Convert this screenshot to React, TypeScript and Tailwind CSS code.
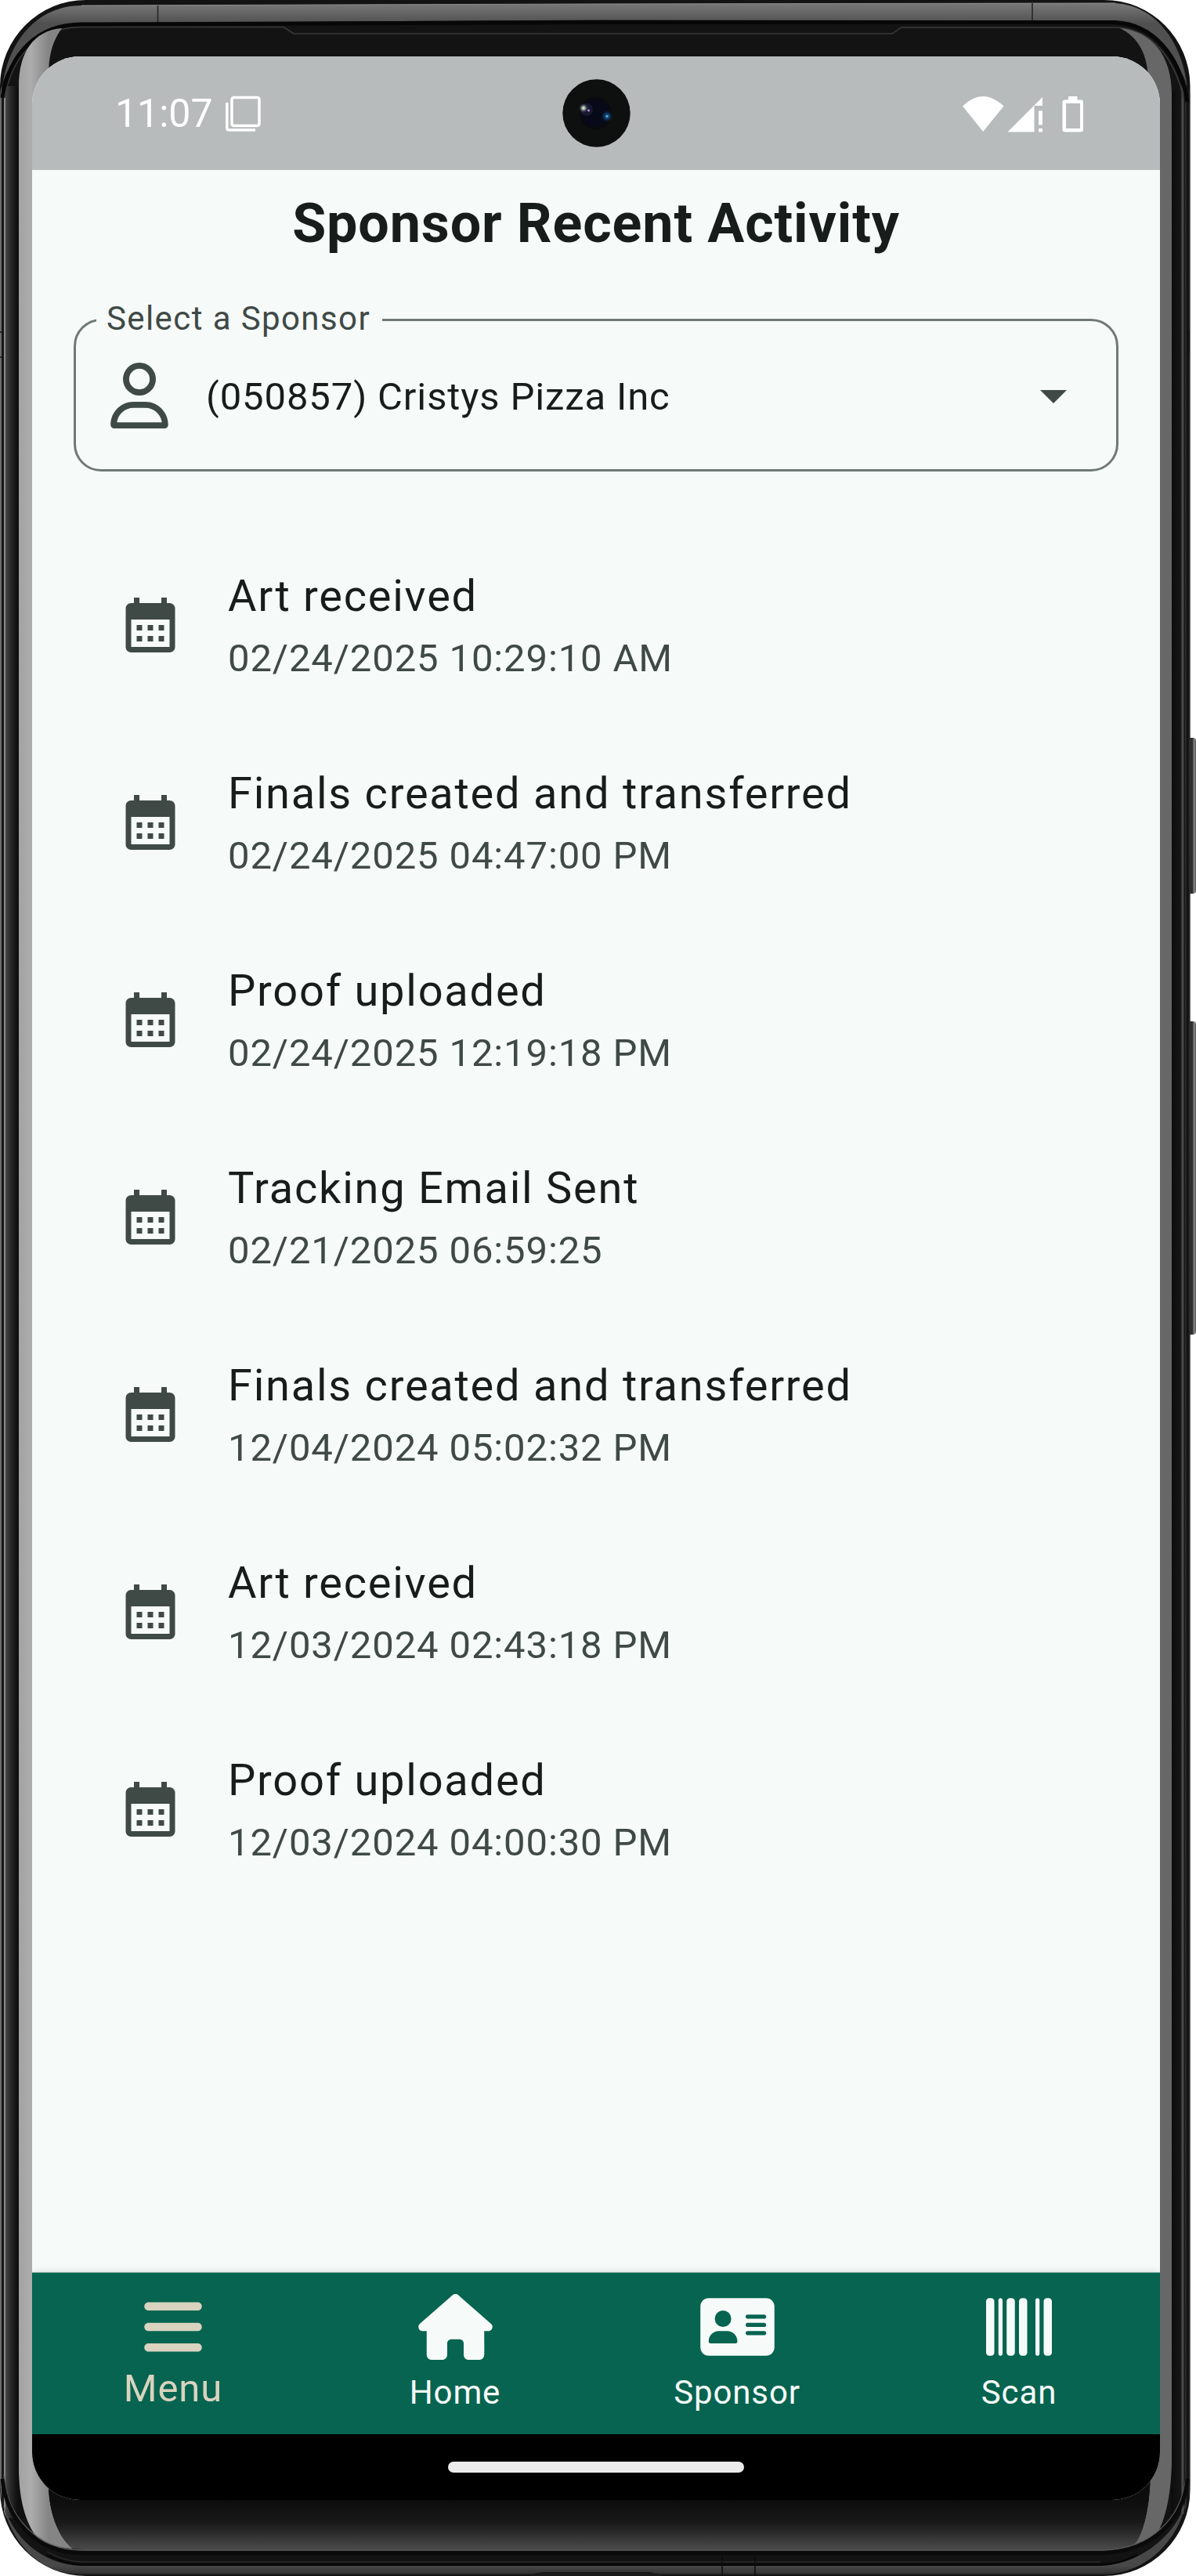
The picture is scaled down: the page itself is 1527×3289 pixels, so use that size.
import React from "react";
import { FaAddressCard, FaBarcode, FaBars, FaHouse, FaRegUser } from "react-icons/fa6";

const activities = [
  { title: "Art received", date: "02/24/2025 10:29:10 AM" },
  { title: "Finals created and transferred", date: "02/24/2025 04:47:00 PM" },
  { title: "Proof uploaded", date: "02/24/2025 12:19:18 PM" },
  { title: "Tracking Email Sent", date: "02/21/2025 06:59:25" },
  { title: "Finals created and transferred", date: "12/04/2024 05:02:32 PM" },
  { title: "Art received", date: "12/03/2024 02:43:18 PM" },
  { title: "Proof uploaded", date: "12/03/2024 04:00:30 PM" },
];

function PhoneBody() {
  return (
    <svg className="absolute inset-0 h-[3289px] w-[1527px]" viewBox="0 0 1527 3289" fill="none" aria-hidden="true">
      <defs>
        <linearGradient id="band" x1="0" y1="5" x2="0" y2="30" gradientUnits="userSpaceOnUse">
          <stop offset="0" stopColor="#777777" />
          <stop offset="1" stopColor="#505050" />
        </linearGradient>
        <linearGradient id="left" x1="0" y1="0" x2="41" y2="0" gradientUnits="userSpaceOnUse">
          <stop offset="0" stopColor="#6b6b6b" />
          <stop offset="0.04" stopColor="#6b6b6b" />
          <stop offset="0.06" stopColor="#161616" />
          <stop offset="0.11" stopColor="#161616" />
          <stop offset="0.12" stopColor="#8a8a8a" />
          <stop offset="0.16" stopColor="#8a8a8a" />
          <stop offset="0.18" stopColor="#454545" />
          <stop offset="0.35" stopColor="#262626" />
          <stop offset="0.55" stopColor="#0f0f0f" />
        </linearGradient>
        <linearGradient id="right" x1="1495" y1="0" x2="1520" y2="0" gradientUnits="userSpaceOnUse">
          <stop offset="0" stopColor="#0c0c0c" />
          <stop offset="0.5" stopColor="#151515" />
          <stop offset="0.56" stopColor="#444444" />
          <stop offset="0.64" stopColor="#4d4d4d" />
          <stop offset="0.68" stopColor="#0c0c0c" />
          <stop offset="0.76" stopColor="#353535" />
          <stop offset="0.8" stopColor="#101010" />
          <stop offset="0.93" stopColor="#1a1a1a" />
          <stop offset="1" stopColor="#6b6b6b" />
        </linearGradient>
        <linearGradient id="glass" x1="0" y1="3192" x2="0" y2="3256" gradientUnits="userSpaceOnUse">
          <stop offset="0" stopColor="#0d0d0d" />
          <stop offset="0.45" stopColor="#191919" />
          <stop offset="1" stopColor="#4b4b4b" />
        </linearGradient>
        <linearGradient id="shineLeft" x1="24" y1="0" x2="62" y2="0" gradientUnits="userSpaceOnUse">
          <stop offset="0" stopColor="#a2a2a2" />
          <stop offset="0.4" stopColor="#adadad" />
          <stop offset="1" stopColor="#858585" />
        </linearGradient>
        <linearGradient id="foot" x1="0" y1="3276" x2="0" y2="3289" gradientUnits="userSpaceOnUse">
          <stop offset="0" stopColor="#484848" />
          <stop offset="0.7" stopColor="#333333" />
          <stop offset="1" stopColor="#141414" />
        </linearGradient>
        <linearGradient id="button" x1="1518" y1="0" x2="1527" y2="0" gradientUnits="userSpaceOnUse">
          <stop offset="0" stopColor="#1b1b1b" />
          <stop offset="0.5" stopColor="#343434" />
          <stop offset="0.75" stopColor="#8a8a8a" />
          <stop offset="1" stopColor="#565656" />
        </linearGradient>
      </defs>

      <rect x="1512" y="942" width="15" height="199" rx="4" fill="url(#button)" />
      <rect x="1512" y="1304" width="15" height="400" rx="4" fill="url(#button)" />

      <rect x="0" y="0" width="1519.5" height="3289" rx="110" fill="#131313" />
      <path d="M0 130V3165Q1 3200 8 3215H41V110H2Q0 118 0 130Z" fill="url(#left)" />
      <path d="M1495 120V3210H1512Q1519.500 3190 1519.500 3170V120L1515 100Z" fill="url(#right)" />

      <path d="M2 120C8 50 50 7 104 7L763 5L1318 4H1424C1474 7 1508 50 1516 110C1496 58 1464 29 1420 26L763 25.500L201 29H104C58 31 22 58 4 104Z" fill="url(#band)" />
      <path d="M104 7L763 5L1424 4" stroke="#8a8a8a" strokeWidth="1" />
      <path d="M201.500 7V30M1318 4V26" stroke="#222222" strokeWidth="1.500" />
      <path d="M3 125C12 68 48 31 104 31L763 28.500H1424C1472 31 1506 70 1516 130" stroke="#070707" strokeWidth="5" />
      <path d="M6 125C15 72 48 35 104 34.500H362L375 43H1139L1151 35H1424C1470 36 1500 75 1511 125" stroke="#3b3b3b" strokeWidth="1.500" />

      <path d="M24 110C24 68 42 39 79 36C66 54 62 72 62 100V3172C62 3206 74 3240 93 3254C72 3253 50 3246 45 3237C30 3215 24 3185 24 3150Z" fill="url(#shineLeft)" />
      <path d="M1430 36C1455 48 1465 72 1466 100L1481 160V3130L1468.500 3168C1467 3205 1459 3240 1445 3252C1456 3251 1468 3247 1473 3241C1490 3220 1496 3175 1496 3140V120C1496 70 1470 40 1430 36Z" fill="#676767" />

      <path d="M62 3150V3172C62 3206 74 3240 93 3254L110 3255.500H1410L1445 3252C1459 3240 1467 3205 1468.500 3168V3150Z" fill="url(#glass)" />
      <path d="M5 3160C8 3210 45 3256 104 3256H1410C1470 3254 1508 3215 1514 3165" stroke="#5c5c5c" strokeWidth="1.500" />
      <path d="M3 3165C8 3215 45 3259.500 104 3259.500H1410C1470 3257 1512 3218 1516 3165" stroke="#0a0a0a" strokeWidth="5" />
      <path d="M2 3190C14 3240 55 3275 104 3276H1405C1455 3275 1505 3235 1515 3190C1506 3245 1462 3286 1410 3287H104C50 3287 12 3245 2 3190Z" fill="url(#foot)" />
      <path d="M60 3262Q80 3273 104 3274.500H1405Q1430 3274 1452 3262" stroke="#060606" strokeWidth="2.500" />
      <path d="M60 3258Q82 3270 104 3271H1405" stroke="#333333" strokeWidth="1" />
      <path d="M922 3258V3289M964 3258V3289" stroke="#0c0c0c" strokeWidth="1.500" />
      <path d="M676 3289Q684 3284 696 3284H830Q838 3285 846 3289Z" fill="#1a1a1a" />
      <path d="M0 424H3M0 456H3M1518 421V451" stroke="#161616" strokeWidth="1.500" />
    </svg>
  );
}

function Camera() {
  return (
    <svg className="absolute left-[677px] top-[29px] h-[87px] w-[87px]" viewBox="0 0 87 87" aria-hidden="true">
      <defs>
        <radialGradient id="lens">
          <stop offset="0" stopColor="#070a18" />
          <stop offset="0.7" stopColor="#08091a" />
          <stop offset="1" stopColor="#090b0b" />
        </radialGradient>
        <radialGradient id="cyan">
          <stop offset="0" stopColor="#a9dcff" />
          <stop offset="0.25" stopColor="#155788" />
          <stop offset="1" stopColor="#0a2a55" stopOpacity="0" />
        </radialGradient>
        <radialGradient id="white">
          <stop offset="0" stopColor="#ffffff" />
          <stop offset="0.3" stopColor="#a5b5a5" />
          <stop offset="1" stopColor="#304050" stopOpacity="0" />
        </radialGradient>
      </defs>
      <circle cx="43.500" cy="43.500" r="43.200" fill="#0e100f" />
      <circle cx="42.500" cy="43.500" r="21" fill="url(#lens)" />
      <circle cx="31" cy="39" r="8" fill="#3c3f66" opacity="0.3" />
      <circle cx="57" cy="47.500" r="7.500" fill="url(#cyan)" />
      <circle cx="27" cy="37" r="6" fill="url(#white)" />
      <circle cx="33.500" cy="40" r="1.500" fill="#c58be0" />
    </svg>
  );
}

function StatusBar() {
  return (
    <header className="relative flex h-[145px] shrink-0 items-center justify-between bg-[#b7bbbb] pl-[106px] pr-[97px] text-white">
      <div className="flex items-center gap-[16px]">
        <span className="text-[50px] leading-[60px]">11:07</span>
        <svg className="h-[46px] w-[45px]" viewBox="0 0 45 46" fill="none" stroke="white" strokeWidth="3.500" aria-hidden="true">
          <rect x="8" y="2.500" width="35" height="36" rx="2.500" />
          <path d="M1.800 9V41.500Q1.800 44 4.300 44H38" />
        </svg>
      </div>
      <svg className="h-[48px] w-[156px]" viewBox="0 0 156 48" fill="white" aria-hidden="true">
        <path d="M1 14.500Q27 -10.500 53.500 14.500L27.200 47Z" />
        <path d="M58.500 47.500L103 3V14H92.500V47.500Z" />
        <path d="M98 20.500H103V38.500H98ZM98 43H103V47.500H98Z" />
        <path fillRule="evenodd" d="M136 2H147.500V6.500H152Q155 6.500 155 9.500V44.500Q155 47.500 152 47.500H131.500Q128.500 47.500 128.500 44.500V9.500Q128.500 6.500 131.500 6.500H136ZM133 11V43H151V11Z" />
      </svg>
      <Camera />
    </header>
  );
}

function SponsorSelect() {
  return (
    <div className="relative ml-[53px] mr-[53px] mt-[73px] flex h-[195px] items-center rounded-[35px] border-[3px] border-[#6f7975] pl-[44px] pr-[63px]">
      <span className="absolute left-[26px] top-[-28px] bg-[#f6faf8] pl-[13px] pr-[15px] text-[42px] leading-[50px] tracking-[1.4px] text-[#3f4946]">
        Select a Sponsor
      </span>
      <FaRegUser className="h-[84px] w-[74px] text-[#3f4946]" />
      <span className="ml-[48px] flex-1 pt-[5px] text-[49px] leading-[60px] tracking-[0.875px]">(050857) Cristys Pizza Inc</span>
      <svg className="mt-[3px] h-[17px] w-[34px]" viewBox="0 0 34 17" fill="#3f4946" aria-hidden="true">
        <path d="M0 0H34L17 17Z" />
      </svg>
    </div>
  );
}

function CalendarIcon() {
  return (
    <svg className="size-[84px] text-[#3f4946]" viewBox="0 0 24 24" fill="currentColor" aria-hidden="true">
      <path d="M19 4h-1V2h-2v2H8V2H6v2H5c-1.110 0-1.990.9-1.990 2L3 20c0 1.100.89 2 2 2h14c1.100 0 2-.9 2-2V6c0-1.100-.9-2-2-2zm0 16H5V10h14v10zM9 14H7v-2h2v2zm4 0h-2v-2h2v2zm4 0h-2v-2h2v2zm-8 4H7v-2h2v2zm4 0h-2v-2h2v2zm4 0h-2v-2h2v2z" />
    </svg>
  );
}

function ActivityRow({ title, date }: { title: string; date: string }) {
  return (
    <li className="flex h-[252px] items-center gap-[57px] pl-[109px]">
      <CalendarIcon />
      <div>
        <p className="text-[56px] leading-[84px] tracking-[1.75px]">{title}</p>
        <p className="pt-px text-[49px] leading-[74px] tracking-[0.875px] text-[#3f4946]">{date}</p>
      </div>
    </li>
  );
}

function NavTab({ label, icon }: { label: string; icon: React.ReactNode }) {
  return (
    <a className="flex flex-1 flex-col items-center pt-[27px] text-[#f6faf8]">
      {icon}
      <span className="mt-[17px] text-[42px] leading-[50px] tracking-[0.875px]">{label}</span>
    </a>
  );
}

export default function App() {
  return (
    <div className="relative h-[3289px] w-[1527px] overflow-hidden bg-white pl-[41px] pt-[72px] font-['Roboto',sans-serif] text-[#171d1b]">
      <PhoneBody />
      <div className="relative flex h-[3120px] w-[1440px] flex-col overflow-hidden rounded-[61px] bg-[#f6faf8]">
        <StatusBar />
        <main className="flex flex-1 flex-col">
          <h1 className="mt-[19px] text-center text-[70px] font-bold leading-[98px] tracking-[0.875px]">Sponsor Recent Activity</h1>
          <SponsorSelect />
          <ul className="mt-[70px]">
            {activities.map((activity, index) => (
              <ActivityRow key={index} {...activity} />
            ))}
          </ul>
        </main>
        <nav className="flex h-[207px] shrink-0 border-t border-[#86aea4] bg-[#066450] shadow-[0_0_10px_rgba(0,0,0,0.12)]">
          <a className="flex flex-1 flex-col items-center pt-[27px] text-[#d9d3bf]">
            <FaBars className="h-[84px] w-[74px]" />
            <span className="mt-[7px] text-[49px] leading-[60px] tracking-[0.875px]">Menu</span>
          </a>
          <NavTab label="Home" icon={<FaHouse className="h-[84px] w-[95px]" />} />
          <NavTab label="Sponsor" icon={<FaAddressCard className="h-[84px] w-[95px]" />} />
          <NavTab label="Scan" icon={<FaBarcode className="size-[84px]" />} />
        </nav>
        <div className="flex h-[84px] shrink-0 items-center justify-center bg-black">
          <div className="h-[14px] w-[378px] rounded-full bg-[#ebebeb]" />
        </div>
      </div>
    </div>
  );
}
